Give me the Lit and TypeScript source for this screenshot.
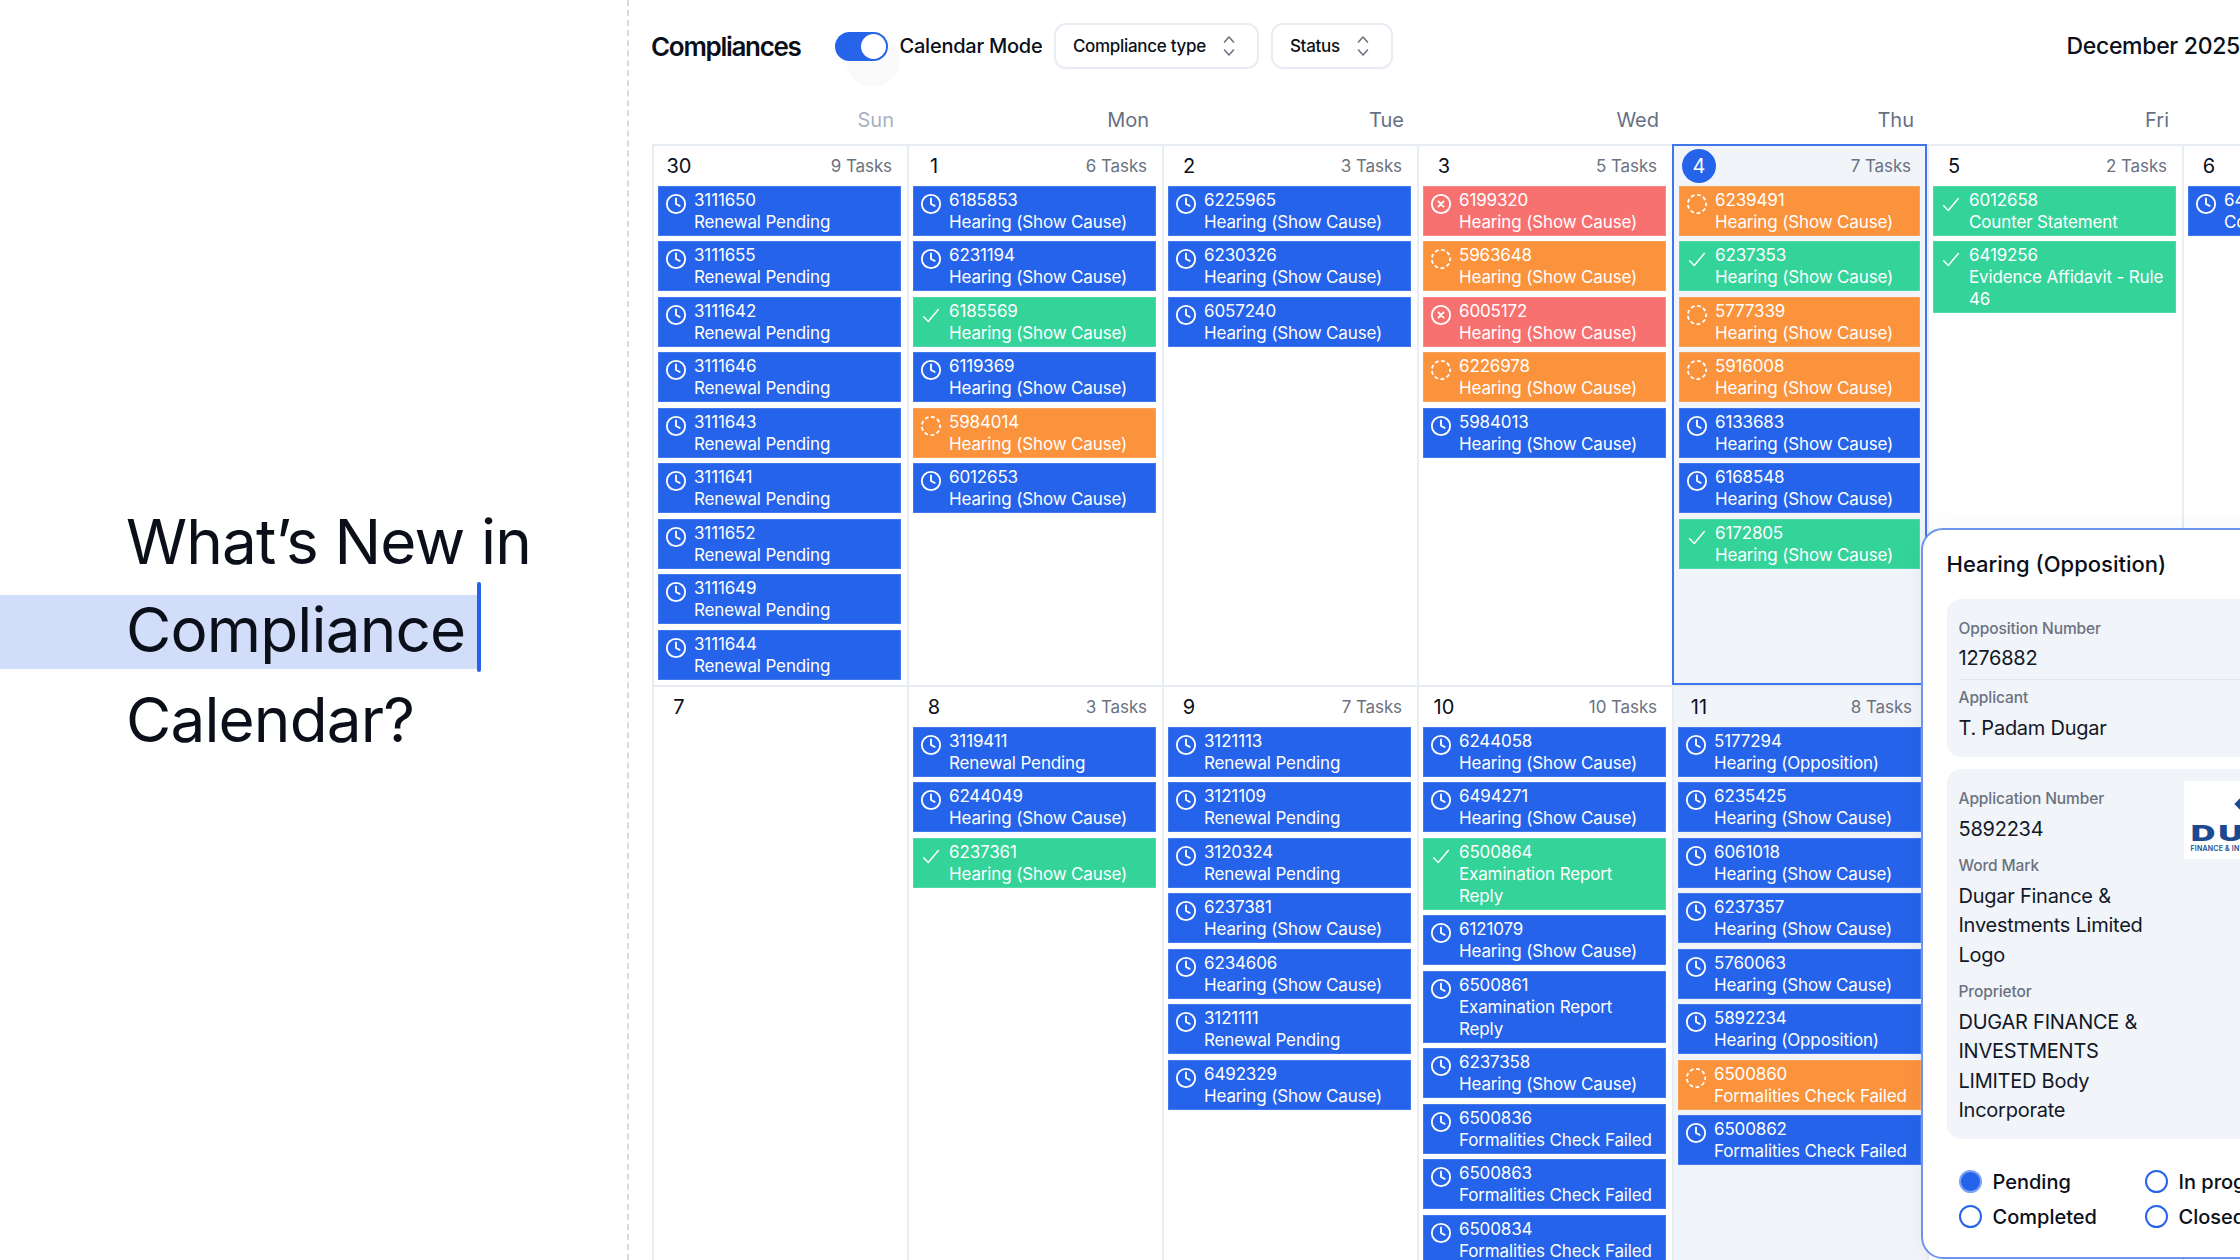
import { LitElement, html, svg, css } from 'lit';
import { customElement } from 'lit/decorators.js';
import { classMap } from 'lit/directives/class-map.js';

type Status = 'pending' | 'done' | 'progress' | 'failed';
interface Task { id: string; label: string; status: Status; }
interface Day { num: number; count?: number; today?: boolean; tint?: boolean; tasks: Task[]; }

const HEARING = 'Hearing (Show Cause)';
const OPPOSITION = 'Hearing (Opposition)';
const RENEWAL = 'Renewal Pending';
const FORMALITIES = 'Formalities Check Failed';
const EXAM = 'Examination Report Reply';

const t = (id: string, label: string, status: Status = 'pending'): Task => ({ id, label, status });
const renewals = (...ids: string[]) => ids.map((id) => t(id, RENEWAL));

const WEEKDAYS = ['Sun', 'Mon', 'Tue', 'Wed', 'Thu', 'Fri', 'Sat'];

const DAYS: Day[] = [
  { num: 30, count: 9, tasks: renewals('3111650', '3111655', '3111642', '3111646', '3111643', '3111641', '3111652', '3111649', '3111644') },
  { num: 1, count: 6, tasks: [t('6185853', HEARING), t('6231194', HEARING), t('6185569', HEARING, 'done'), t('6119369', HEARING), t('5984014', HEARING, 'progress'), t('6012653', HEARING)] },
  { num: 2, count: 3, tasks: [t('6225965', HEARING), t('6230326', HEARING), t('6057240', HEARING)] },
  { num: 3, count: 5, tasks: [t('6199320', HEARING, 'failed'), t('5963648', HEARING, 'progress'), t('6005172', HEARING, 'failed'), t('6226978', HEARING, 'progress'), t('5984013', HEARING)] },
  { num: 4, count: 7, today: true, tasks: [t('6239491', HEARING, 'progress'), t('6237353', HEARING, 'done'), t('5777339', HEARING, 'progress'), t('5916008', HEARING, 'progress'), t('6133683', HEARING), t('6168548', HEARING), t('6172805', HEARING, 'done')] },
  { num: 5, count: 2, tasks: [t('6012658', 'Counter Statement', 'done'), t('6419256', 'Evidence Affidavit - Rule 46', 'done')] },
  { num: 6, count: 1, tasks: [t('6419257', 'Counter Statement')] },
  { num: 7, tasks: [] },
  { num: 8, count: 3, tasks: [t('3119411', RENEWAL), t('6244049', HEARING), t('6237361', HEARING, 'done')] },
  { num: 9, count: 7, tasks: [t('3121113', RENEWAL), t('3121109', RENEWAL), t('3120324', RENEWAL), t('6237381', HEARING), t('6234606', HEARING), t('3121111', RENEWAL), t('6492329', HEARING)] },
  { num: 10, count: 10, tasks: [t('6244058', HEARING), t('6494271', HEARING), t('6500864', EXAM, 'done'), t('6121079', HEARING), t('6500861', EXAM), t('6237358', HEARING), t('6500836', FORMALITIES), t('6500863', FORMALITIES), t('6500834', FORMALITIES)] },
  { num: 11, count: 8, tint: true, tasks: [t('5177294', OPPOSITION), t('6235425', HEARING), t('6061018', HEARING), t('6237357', HEARING), t('5760063', HEARING), t('5892234', OPPOSITION), t('6500860', FORMALITIES, 'progress'), t('6500862', FORMALITIES)] },
  { num: 12, tasks: [] },
  { num: 13, tasks: [] },
];

const ICONS: Record<Status, unknown> = {
  pending: svg`<circle cx="12" cy="12" r="10"/><path d="M12 6v6l4 2"/>`,
  done: svg`<path d="M4 14l5 5L20 6" stroke-width="1.6"/>`,
  progress: svg`<circle cx="12" cy="12" r="10" stroke-linecap="butt" stroke-dasharray="4.2 2.78" stroke-dashoffset="2"/>`,
  failed: svg`<circle cx="12" cy="12" r="10"/><path d="M14.8 9.2l-5.6 5.6M9.2 9.2l5.6 5.6"/>`,
};

const chevrons = html`<svg class="chev" viewBox="0 0 14 24" fill="none" stroke="#6b7280" stroke-width="1.6" stroke-linecap="round" stroke-linejoin="round"><path d="M2.5 8L7 3l4.5 5M2.5 16L7 21l4.5-5"/></svg>`;

@customElement('app-root')
export class AppRoot extends LitElement {
  static styles = css`
    :host {
      display: flex;
      position: relative;
      width: 2240px;
      height: 1260px;
      overflow: hidden;
      background: #fff;
      color: #0b0f19;
      font-family: Inter, "Liberation Sans", sans-serif;
    }

    /* left intro */
    .intro {
      flex: none;
      box-sizing: border-box;
      width: 629px;
      display: flex;
      flex-direction: column;
      justify-content: center;
      border-right: 2px dashed #d9dbe0;
      font-size: 62px;
      line-height: 89px;
      letter-spacing: -0.85px;
    }
    .intro div {
      padding-left: 126px;
    }
    .intro .selected {
      position: relative;
      box-sizing: border-box;
      width: 478px;
      height: 74px;
      line-height: 69px;
      margin: 9.5px 0 5.5px;
      background: #d2ddf9;
    }
    .intro .selected::after {
      content: '';
      position: absolute;
      left: 477px;
      top: -13px;
      width: 4px;
      height: 90px;
      border-radius: 2px;
      background: #2563eb;
    }

    /* toolbar */
    .main {
      flex: 1;
      min-width: 0;
      padding-left: 23px;
    }
    .toolbar {
      display: flex;
      align-items: center;
      height: 92px;
      margin-left: -1px;
      white-space: nowrap;
    }
    .toolbar h1 {
      margin: 0 34px 0 0;
      font-size: 26px;
      font-weight: 600;
      letter-spacing: -1.3px;
    }
    .toggle {
      position: relative;
      flex: none;
      box-sizing: border-box;
      width: 53px;
      height: 29px;
      border-radius: 15px;
      background: #2563eb;
      margin-right: 12px;
    }
    .toggle::before {
      content: '';
      position: absolute;
      left: 11px;
      top: 1px;
      width: 54px;
      height: 54px;
      border-radius: 50%;
      background: rgba(120, 130, 150, 0.04);
    }
    .toggle::after {
      content: '';
      position: absolute;
      right: 2px;
      top: 2px;
      width: 25px;
      height: 25px;
      border-radius: 50%;
      background: #fff;
    }
    .mode {
      font-size: 20px;
      font-weight: 500;
      letter-spacing: -0.25px;
      margin-right: 12px;
    }
    .select {
      box-sizing: border-box;
      display: flex;
      align-items: center;
      justify-content: space-between;
      height: 46px;
      padding: 0 21px 0 16.5px;
      margin-right: 12px;
      border: 2px solid #e8ecf3;
      border-radius: 12px;
      font-size: 17px;
      font-weight: 500;
      letter-spacing: -0.3px;
    }
    .select.type { width: 205px; }
    .select.state { width: 122px; }
    .chev { width: 14px; height: 24px; }
    .month {
      margin-left: auto;
      font-size: 23px;
      font-weight: 500;
      letter-spacing: -0.3px;
    }

    /* calendar */
    .weekdays {
      display: grid;
      grid-template-columns: repeat(7, 255px);
      height: 48px;
      padding-top: 4px;
      width: 1785px;
    }
    .weekdays span {
      text-align: right;
      padding-right: 13px;
      font-size: 20px;
      line-height: 48px;
      color: #667085;
    }
    .weekdays span:first-child { color: #a9b2c0; }
    .grid {
      display: grid;
      grid-template-columns: repeat(7, 255px);
      grid-template-rows: 541px 600px;
      width: 1785px;
    }
    .day {
      box-sizing: border-box;
      padding: 0 6px 0 4px;
      border-top: 2px solid #e8ecf3;
      border-left: 2px solid #e8ecf3;
      overflow: hidden;
    }
    .day.tint { background: #f1f4f9; }
    .day.today {
      padding: 0 5px;
      border: 2px solid #3f76ee;
      background: #f1f4f9;
    }
    .head {
      display: flex;
      align-items: center;
      justify-content: space-between;
      height: 40px;
      padding: 0 2px 0 4px;
    }
    .today .head { padding-left: 3px; }
    .num {
      width: 34px;
      height: 34px;
      border-radius: 50%;
      text-align: center;
      font-size: 20px;
      line-height: 34px;
    }
    .today .num {
      background: #2563eb;
      color: #fff;
    }
    .count {
      font-size: 17px;
      letter-spacing: -0.1px;
      color: #6b7280;
      padding-right: 7px;
    }
    .tasks {
      display: flex;
      flex-direction: column;
      gap: 5.45px;
    }
    .task {
      display: flex;
      gap: 7px;
      box-sizing: border-box;
      padding: 2px 6px;
      border: 1px solid rgba(255, 255, 255, 0.14);
      color: #fff;
      font-size: 17px;
      line-height: 22px;
      letter-spacing: -0.14px;
    }
    .task svg {
      flex: none;
      width: 22px;
      height: 22px;
      margin-top: 4px;
      fill: none;
      stroke: #fff;
      stroke-width: 2;
      stroke-linecap: round;
      stroke-linejoin: round;
    }
    .task.pending { background-color: #2563eb; }
    .task.done { background-color: #34d399; }
    .task.progress { background-color: #fb923c; }
    .task.failed { background-color: #f87171; }

    /* detail popover */
    .popover {
      position: absolute;
      left: 1921px;
      top: 528px;
      box-sizing: border-box;
      width: 460px;
      height: 731px;
      padding: 19px 23.5px 0;
      border: 2.5px solid #6d94ee;
      border-radius: 22px;
      background: #fff;
      box-shadow: 0 0 24px rgba(30, 50, 90, 0.05);
    }
    .popover h2 {
      margin: 0 0 19.5px;
      font-size: 22px;
      line-height: 30px;
      font-weight: 500;
    }
    .card {
      padding: 20px 12px 13.7px;
      border-radius: 14px;
      background: #f1f4f9;
    }
    .card + .card {
      display: flex;
      margin-top: 12.5px;
    }
    .fields { flex: none; width: 225px; }
    .label {
      margin-top: 12px;
      font-size: 15.5px;
      line-height: 20px;
      font-weight: 500;
      letter-spacing: -0.1px;
      color: #6b7280;
    }
    .label.first { margin-top: 0; }
    .value {
      margin-top: 5.9px;
      padding-right: 15px;
      font-size: 20px;
      line-height: 29.3px;
      letter-spacing: -0.25px;
      color: #111827;
    }
    .rule {
      height: 1px;
      margin: 5px 0 8px;
      background: #e3e7ee;
    }
    .logo {
      position: relative;
      flex: none;
      width: 110px;
      height: 78px;
      margin-top: -8.5px;
      background: #fff;
      overflow: hidden;
      color: #1c4a90;
      white-space: nowrap;
    }
    .logo .mark {
      position: absolute;
      left: 52px;
      top: 19px;
      width: 8px;
      height: 8px;
      background: #1c4a90;
      transform: rotate(45deg);
    }
    .logo .word {
      position: absolute;
      left: 7px;
      top: 41px;
      font-size: 21px;
      line-height: 24px;
      font-weight: 900;
      letter-spacing: 2px;
      transform: scaleX(1.6);
      transform-origin: left;
    }
    .logo .sub {
      position: absolute;
      left: 7px;
      top: 63px;
      font-size: 7px;
      line-height: 9px;
      font-weight: 600;
      letter-spacing: 0.2px;
    }
    .radios {
      display: grid;
      grid-template-columns: 186px 186px;
      grid-auto-rows: 35px;
      margin-top: 25.5px;
      padding-left: 12px;
    }
    .radio {
      display: flex;
      align-items: center;
      gap: 11px;
      font-size: 20px;
      font-weight: 500;
      white-space: nowrap;
    }
    .radio i {
      box-sizing: border-box;
      width: 23px;
      height: 23px;
      border: 2px solid #2563eb;
      border-radius: 50%;
    }
    .radio.on i {
      background: #2563eb;
      border-color: #7ea3f2;
    }
  `;

  private renderTask(task: Task) {
    return html`
      <div class="task ${task.status}">
        <svg viewBox="0 0 24 24">${ICONS[task.status]}</svg>
        <div>${task.id}<br />${task.label}</div>
      </div>
    `;
  }

  private renderDay(day: Day) {
    return html`
      <div class=${classMap({ day: true, today: !!day.today, tint: !!day.tint })}>
        <div class="head">
          <span class="num">${day.num}</span>
          ${day.count ? html`<span class="count">${day.count} Tasks</span>` : ''}
        </div>
        <div class="tasks">${day.tasks.map((task) => this.renderTask(task))}</div>
      </div>
    `;
  }

  render() {
    return html`
      <section class="intro">
        <div>What’s New in</div>
        <div class="selected">Compliance</div>
        <div>Calendar?</div>
      </section>

      <section class="main">
        <div class="toolbar">
          <h1>Compliances</h1>
          <span class="toggle"></span>
          <span class="mode">Calendar Mode</span>
          <div class="select type">Compliance type ${chevrons}</div>
          <div class="select state">Status ${chevrons}</div>
          <span class="month">December 2025</span>
        </div>
        <div class="weekdays">${WEEKDAYS.map((d) => html`<span>${d}</span>`)}</div>
        <div class="grid">${DAYS.map((d) => this.renderDay(d))}</div>
      </section>

      <aside class="popover">
        <h2>Hearing (Opposition)</h2>
        <div class="card">
          <div class="label first">Opposition Number</div>
          <div class="value">1276882</div>
          <div class="rule"></div>
          <div class="label first">Applicant</div>
          <div class="value">T. Padam Dugar</div>
        </div>
        <div class="card">
          <div class="fields">
            <div class="label first">Application Number</div>
            <div class="value">5892234</div>
            <div class="label">Word Mark</div>
            <div class="value">Dugar Finance &amp; Investments Limited Logo</div>
            <div class="label">Proprietor</div>
            <div class="value">DUGAR FINANCE &amp; INVESTMENTS LIMITED Body Incorporate</div>
          </div>
          <div class="logo">
            <span class="mark"></span>
            <span class="word">DUGAR</span>
            <span class="sub">FINANCE &amp; INVESTMENTS LIMITED</span>
          </div>
        </div>
        <div class="radios">
          <label class="radio on"><i></i>Pending</label>
          <label class="radio"><i></i>In progress</label>
          <label class="radio"><i></i>Completed</label>
          <label class="radio"><i></i>Closed</label>
        </div>
      </aside>
    `;
  }
}

declare global {
  interface HTMLElementTagNameMap {
    'app-root': AppRoot;
  }
}
